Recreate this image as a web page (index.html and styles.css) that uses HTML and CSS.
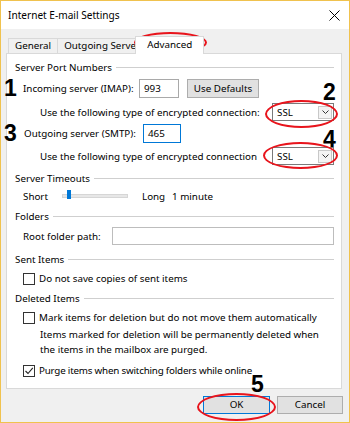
FILE: index.html
```html
<!DOCTYPE html>
<html>
<head>
<meta charset="utf-8">
<link rel="stylesheet" href="styles.css">
</head>
<body>
<div class="window">
  <div class="titlebar">
    <span class="title">Internet E-mail Settings</span>
    <svg class="close" width="11" height="11" viewBox="0 0 11 11"><path d="M0.5 0.5L10.5 10.5M10.5 0.5L0.5 10.5" stroke="#000" stroke-width="1"/></svg>
  </div>
  <div class="tabs">
    <div class="tab">General</div>
    <div class="tab tab-out">Outgoing Server</div>
    <div class="tab tab-active">Advanced</div>
  </div>
  <div class="panel">
    <div class="group-head h1"><span>Server Port Numbers</span><i></i></div>
    <div class="row r-in">
      <span class="lbl-in">Incoming server (IMAP):</span>
      <div class="input in-993">993</div>
      <div class="btn btn-def">Use Defaults</div>
    </div>
    <div class="row r-enc">
      <span class="lbl-enc">Use the following type of encrypted connection:</span>
      <div class="select"><span>SSL</span><b class="arrow"><svg width="7" height="4" viewBox="0 0 7 4"><path d="M0.5 0.5L3.5 3.5L6.5 0.5" fill="none" stroke="#333" stroke-width="1"/></svg></b></div>
    </div>
    <div class="row r-out">
      <span class="lbl-out">Outgoing server (SMTP):</span>
      <div class="input in-465">465</div>
    </div>
    <div class="row r-enc2">
      <span class="lbl-enc">Use the following type of encrypted connection</span>
      <div class="select"><span>SSL</span><b class="arrow"><svg width="7" height="4" viewBox="0 0 7 4"><path d="M0.5 0.5L3.5 3.5L6.5 0.5" fill="none" stroke="#333" stroke-width="1"/></svg></b></div>
    </div>
    <div class="group-head h2"><span>Server Timeouts</span><i></i></div>
    <div class="row r-slider">
      <span class="lbl-short">Short</span>
      <div class="track"><div class="thumb"></div></div>
      <span class="lbl-long">Long</span>
      <span class="lbl-min">1 minute</span>
    </div>
    <div class="group-head h3"><span>Folders</span><i></i></div>
    <div class="row r-root">
      <span class="lbl-root">Root folder path:</span>
      <div class="input in-root"></div>
    </div>
    <div class="group-head h4"><span>Sent Items</span><i></i></div>
    <div class="row cb-row r-cb1"><span class="cb"></span><span>Do not save copies of sent items</span></div>
    <div class="group-head h5"><span>Deleted Items</span><i></i></div>
    <div class="row cb-row r-cb2"><span class="cb"></span><span>Mark items for deletion but do not move them automatically</span></div>
    <p class="note">Items marked for deletion will be permanently deleted when<br>the items in the mailbox are purged.</p>
    <div class="row cb-row r-cb3"><span class="cb"><svg width="10" height="10" viewBox="0 0 10 10"><path d="M1.5 5L4 7.5L8.8 1.8" fill="none" stroke="#222" stroke-width="1.1"/></svg></span><span class="purge">Purge items when switching folders while online</span></div>
  </div>
  <div class="buttons">
    <div class="btn btn-ok">OK</div>
    <div class="btn btn-cancel">Cancel</div>
  </div>

  <span class="num n1">1</span>
  <span class="num n2">2</span>
  <span class="num n3">3</span>
  <span class="num n4">4</span>
  <span class="num n5">5</span>
  <span class="ring ring-adv"></span>
  <span class="ring ring-ssl1"></span>
  <span class="ring ring-ssl2"></span>
  <span class="ring ring-ok"></span>
</div>
</body>
</html>
```

FILE: styles.css
```css
* { box-sizing: border-box; }
html, body { margin: 0; padding: 0; }
body {
  width: 350px;
  height: 423px;
  overflow: hidden;
  font-family: "Noto Sans", "Open Sans", sans-serif;
  font-size: 9.8px;
  color: #000;
}
.window {
  position: relative;
  width: 350px;
  height: 423px;
  background: #f0f0f0;
  border: 1px solid #f0c24e;
  display: flex;
  flex-direction: column;
}
.titlebar {
  height: 28px;
  background: #fff;
  display: flex;
  align-items: center;
  justify-content: space-between;
  padding: 0 9px 0 7px;
  flex: none;
}
.title { font-size: 10.1px; }
.tabs {
  display: flex;
  align-items: flex-end;
  height: 24px;
  padding-left: 7px;
  flex: none;
}
.tab {
  height: 15px;
  line-height: 13px;
  border: 1px solid #d9d9d9;
  border-bottom: none;
  padding: 0 6px;
  background: #f0f0f0;
  white-space: nowrap;
}
.tab + .tab { border-left: none; }
.tab-out {
  width: 79px;
  overflow: hidden;
  padding-right: 0;
}
.tab-active {
  position: relative;
  height: 18px;
  line-height: 16px;
  margin-left: -2px;
  margin-bottom: -1px;
  background: #fff;
  border-left: 1px solid #d9d9d9 !important;
  padding: 0 11px 0 11px;
  z-index: 1;
}
.panel {
  margin-left: 5px;
  width: 336px;
  height: 336px;
  background: #fff;
  border: 1px solid #d9d9d9;
  padding: 6px 7px 0 8px;
  flex: none;
}
.group-head {
  display: flex;
  align-items: center;
  height: 14px;
  white-space: nowrap;
}
.group-head i {
  flex: 1;
  height: 1px;
  background: #cfcfcf;
  margin-left: 4px;
}
.row {
  display: flex;
  align-items: center;
  white-space: nowrap;
}
.input {
  background: #fff;
  border: 1px solid #a9a9a9;
  height: 19px;
  line-height: 17px;
  padding-left: 4px;
}
.btn {
  background: #e1e1e1;
  border: 1px solid #adadad;
  text-align: center;
}
.r-in { margin-top: 5px; height: 19px; padding-left: 8px; }
.lbl-in { width: 116px; }
.in-993 { width: 40px; }
.btn-def { margin-left: 8px; width: 72px; height: 19px; line-height: 17px; }
.r-enc { margin-top: 4px; height: 20px; padding-left: 25px; }
.r-enc2 { margin-top: 3px; height: 20px; padding-left: 25px; }
.lbl-enc { width: 232px; }
.select {
  width: 62px;
  height: 18px;
  border: 1px solid #7a7a7a;
  background: #fff;
  display: flex;
  align-items: center;
  justify-content: space-between;
  padding: 0 1px 0 4px;
}
.arrow {
  width: 14px;
  height: 13px;
  border: 1px solid #c8c8c8;
  background: #f3f3f3;
  display: flex;
  align-items: center;
  justify-content: center;
}
.arrow svg { display: block; }
.r-out { margin-top: 2px; height: 19px; padding-left: 9px; }
.lbl-out { width: 119px; }
.in-465 { width: 38px; border-color: #0078d7; }
.h2 { margin-top: 5px; }
.r-slider { margin-top: 3px; height: 16px; padding-left: 8px; position: relative; }
.lbl-short { width: 39px; }
.track {
  position: relative;
  width: 66px;
  height: 4px;
  background: #e7e7e7;
  border: 1px solid #d6d6d6;
}
.thumb {
  position: absolute;
  left: 4px;
  top: -5px;
  width: 4px;
  height: 9px;
  background: #0078d7;
}
.lbl-long { margin-left: 14px; width: 30px; }
.h3 { margin-top: 5px; }
.r-root { margin-top: 4px; height: 18px; padding-left: 8px; }
.lbl-root { width: 89px; }
.in-root { flex: 1; height: 18px; border-color: #bdbdbd; }
.h4 { margin-top: 7px; }
.cb-row { height: 13px; padding-left: 8px; }
.cb {
  width: 12px;
  height: 12px;
  border: 1px solid #333;
  background: #fff;
  margin-right: 4px;
  display: flex;
  align-items: center;
  justify-content: center;
  flex: none;
}
.cb svg { display: block; }
.r-cb1 { margin-top: 6px; }
.h5 { margin-top: 6px; }
.r-cb2 { margin-top: 6px; }
.note {
  margin: 3px 0 0 25px;
  line-height: 15px;
  white-space: nowrap;
}
.r-cb3 { margin-top: 7px; }
.purge { letter-spacing: -0.2px; }
.buttons {
  display: flex;
  justify-content: flex-end;
  gap: 7px;
  padding: 7px 6px 0 0;
}
.btn-ok { width: 67px; height: 18px; line-height: 16px; border-color: #0078d7; }
.btn-cancel { width: 66px; height: 18px; line-height: 16px; }

.num {
  position: absolute;
  font-family: "Liberation Sans", Arial, sans-serif;
  font-weight: bold;
  font-size: 23px;
  line-height: 1;
  color: #000;
}
.n1 { left: 3px; top: 76px; }
.n2 { left: 322px; top: 80px; }
.n3 { left: 3px; top: 121px; }
.n4 { left: 322px; top: 127px; }
.n5 { left: 250px; top: 372px; }
.ring {
  position: absolute;
  border: 2.5px solid #e8141c;
  border-radius: 50%;
}
.ring-adv { left: 133px; top: 31px; width: 73px; height: 21px; }
.ring-ssl1 { left: 264px; top: 99px; width: 73px; height: 28px; }
.ring-ssl2 { left: 262px; top: 141px; width: 75px; height: 27px; }
.ring-ok { left: 196px; top: 392px; width: 79px; height: 28px; }
```
